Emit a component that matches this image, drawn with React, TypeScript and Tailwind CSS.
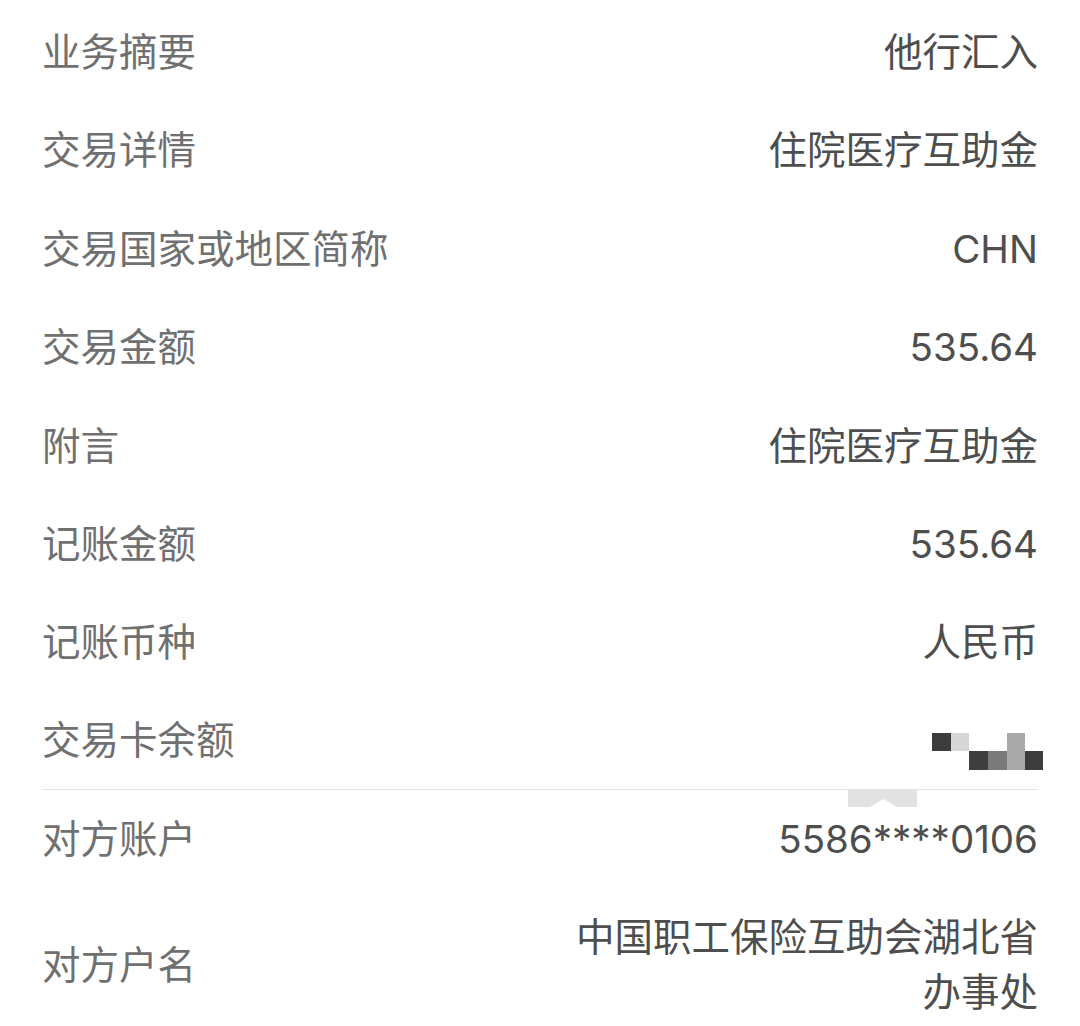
import React from 'react';

type Row = { label: string; value: React.ReactNode };

const font = { fontFamily: 'Inter, "Noto Sans CJK SC", "Noto Sans", sans-serif' };

// pixelated balance, drawn as blocks
const Mosaic: React.FC = () => (
  <div className="grid grid-cols-[19px_18px_19px_19px_18px_18px] grid-rows-[18px_19px] mr-[-5px] mt-[22px]">
    <div className="bg-[#3c3c3c]" />
    <div className="bg-[#d6d6d6]" />
    <div />
    <div />
    <div className="row-span-2 bg-[#a9a9a9]" />
    <div />
    <div />
    <div />
    <div className="bg-[#3e3e3e]" />
    <div className="bg-[#7a7a7a]" />
    <div className="bg-[#3c3c3c]" />
  </div>
);

const topRows: Row[] = [
  { label: '业务摘要', value: '他行汇入' },
  { label: '交易详情', value: '住院医疗互助金' },
  { label: '交易国家或地区简称', value: 'CHN' },
  { label: '交易金额', value: '535.64' },
  { label: '附言', value: '住院医疗互助金' },
  { label: '记账金额', value: '535.64' },
  { label: '记账币种', value: '人民币' },
  { label: '交易卡余额', value: <Mosaic /> },
];

const DetailRow: React.FC<{ row: Row; last?: boolean }> = ({ row, last }) => (
  <div
    className={`flex items-center justify-between h-[98.4px] ${last ? 'border-b border-[#e4e4e4]' : ''}`}
  >
    <span className="text-[38.5px] leading-none text-[#707070]">{row.label}</span>
    <span className="text-[38.5px] leading-none text-[#4e4e4e]">{row.value}</span>
  </div>
);

export default function App() {
  return (
    <div className="w-[1080px] h-[1026px] overflow-hidden bg-white px-[42px] pt-[3px]" style={font}>
      {topRows.map((row, i) => (
        <DetailRow key={row.label} row={row} last={i === topRows.length - 1} />
      ))}

      {/* counterparty */}
      <div className="relative flex items-center justify-between h-[99px]">
        <svg className="absolute left-[806px] top-0" width="69" height="17" viewBox="0 0 69 17">
          <polygon points="0,0 69,0 69,17 49,17 35,9 22,17 0,17" fill="#e2e2e2" />
        </svg>
        <span className="text-[38.5px] leading-none text-[#707070]">对方账户</span>
        <span className="text-[38.5px] leading-none text-[#4e4e4e]">5586****0106</span>
      </div>

      <div className="flex items-center justify-between py-[21px]">
        <span className="text-[38.5px] leading-none text-[#707070]">对方户名</span>
        <span className="max-w-[470px] text-right text-[38.5px] leading-[55px] text-[#4e4e4e]">
          中国职工保险互助会湖北省办事处
        </span>
      </div>
    </div>
  );
}
